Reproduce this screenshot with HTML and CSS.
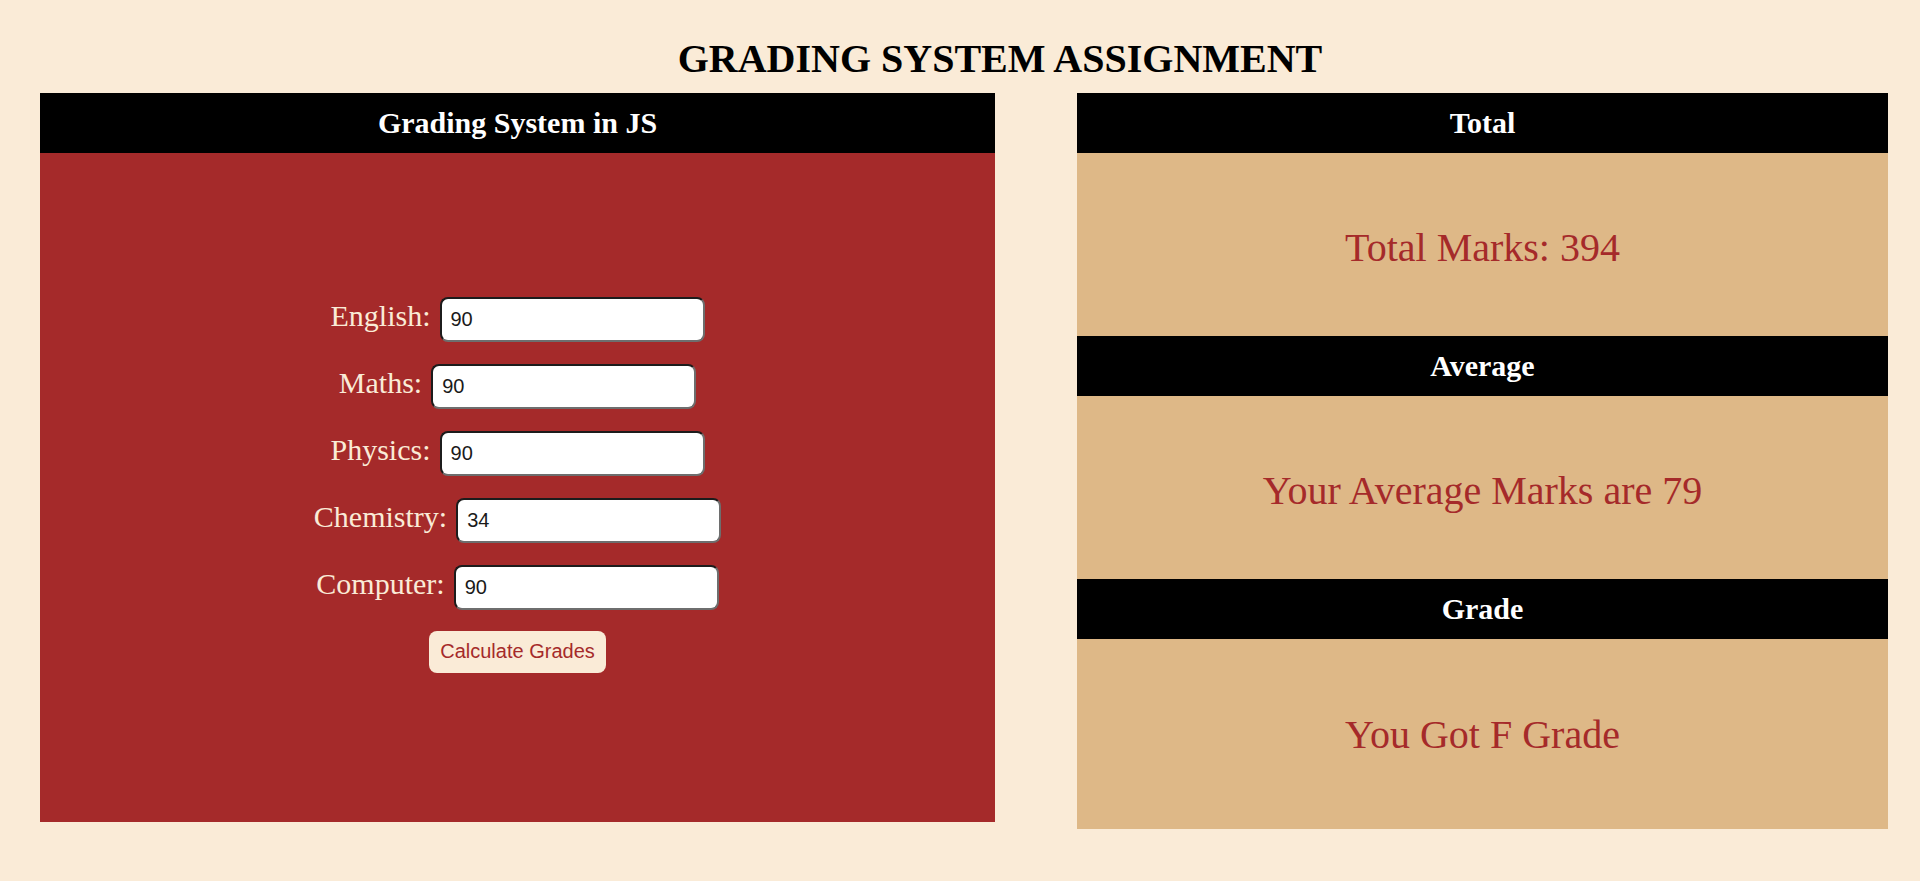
FILE: index.html
```html
<!DOCTYPE html>
<html lang="en">
<head>
<meta charset="utf-8">
<title>Grading System</title>
<link rel="stylesheet" href="styles.css">
</head>
<body>
<h1 class="title">GRADING SYSTEM ASSIGNMENT</h1>
<div class="main">
  <section class="left">
    <h2 class="bar">Grading System in JS</h2>
    <div class="form-area">
      <div class="form">
        <div class="row"><label class="lbl">English:</label><input class="inp" type="text" value="90"></div>
        <div class="row"><label class="lbl">Maths:</label><input class="inp" type="text" value="90"></div>
        <div class="row"><label class="lbl">Physics:</label><input class="inp" type="text" value="90"></div>
        <div class="row"><label class="lbl">Chemistry:</label><input class="inp" type="text" value="34"></div>
        <div class="row"><label class="lbl">Computer:</label><input class="inp" type="text" value="90"></div>
        <button class="btn" type="button">Calculate Grades</button>
      </div>
    </div>
  </section>
  <section class="right">
    <h2 class="bar">Total</h2>
    <div class="result">Total Marks: 394</div>
    <h2 class="bar">Average</h2>
    <div class="result">Your Average Marks are 79</div>
    <h2 class="bar">Grade</h2>
    <div class="result last">You Got F Grade</div>
  </section>
</div>
</body>
</html>
```
FILE: styles.css
```css
html, body {
  margin: 0;
  padding: 0;
}
body {
  background: #faebd7;
  font-family: "Liberation Serif", "Times New Roman", serif;
  width: 1920px;
  height: 881px;
  overflow: hidden;
}
.title {
  margin: 0;
  padding: 36px 0 11px 80px;
  font-size: 40px;
  line-height: 46px;
  font-weight: bold;
  text-align: center;
  color: #000;
}
.main {
  display: flex;
  align-items: flex-start;
  gap: 82px;
  padding-left: 40px;
}
.left {
  width: 955px;
}
.right {
  width: 811px;
}
.bar {
  margin: 0;
  height: 60px;
  line-height: 60px;
  background: #000;
  color: #fff;
  font-size: 30px;
  font-weight: bold;
  text-align: center;
}
.form-area {
  box-sizing: border-box;
  background: #a52a2a;
  height: 669px;
  padding-bottom: 6px;
  display: flex;
  align-items: center;
  justify-content: center;
}
.form {
  display: flex;
  flex-direction: column;
  align-items: center;
  gap: 22px;
}
.row {
  display: flex;
  align-items: baseline;
  gap: 9px;
}
.lbl {
  color: #faebd7;
  font-size: 30px;
}
.inp {
  box-sizing: border-box;
  width: 265px;
  height: 45px;
  margin: 0;
  padding: 0 9px;
  font-family: "Liberation Sans", Arial, sans-serif;
  font-size: 20px;
  color: #1a1a1a;
  background: #fff;
  border: 2px solid;
  border-color: #1c1c1c #6e6e6e #6e6e6e #1c1c1c;
  border-radius: 8px;
  outline: none;
}
.btn {
  margin-top: -1px;
  height: 42px;
  padding: 0 11px;
  border: none;
  border-radius: 8px;
  background: #faebd7;
  color: #a52a2a;
  font-family: "Liberation Sans", Arial, sans-serif;
  font-size: 20px;
}
.result {
  box-sizing: border-box;
  height: 183px;
  padding-top: 6px;
  display: flex;
  align-items: center;
  justify-content: center;
  background: #deb887;
  color: #a52a2a;
  font-size: 40px;
}
.result.last {
  height: 190px;
  padding-top: 0;
}
```
